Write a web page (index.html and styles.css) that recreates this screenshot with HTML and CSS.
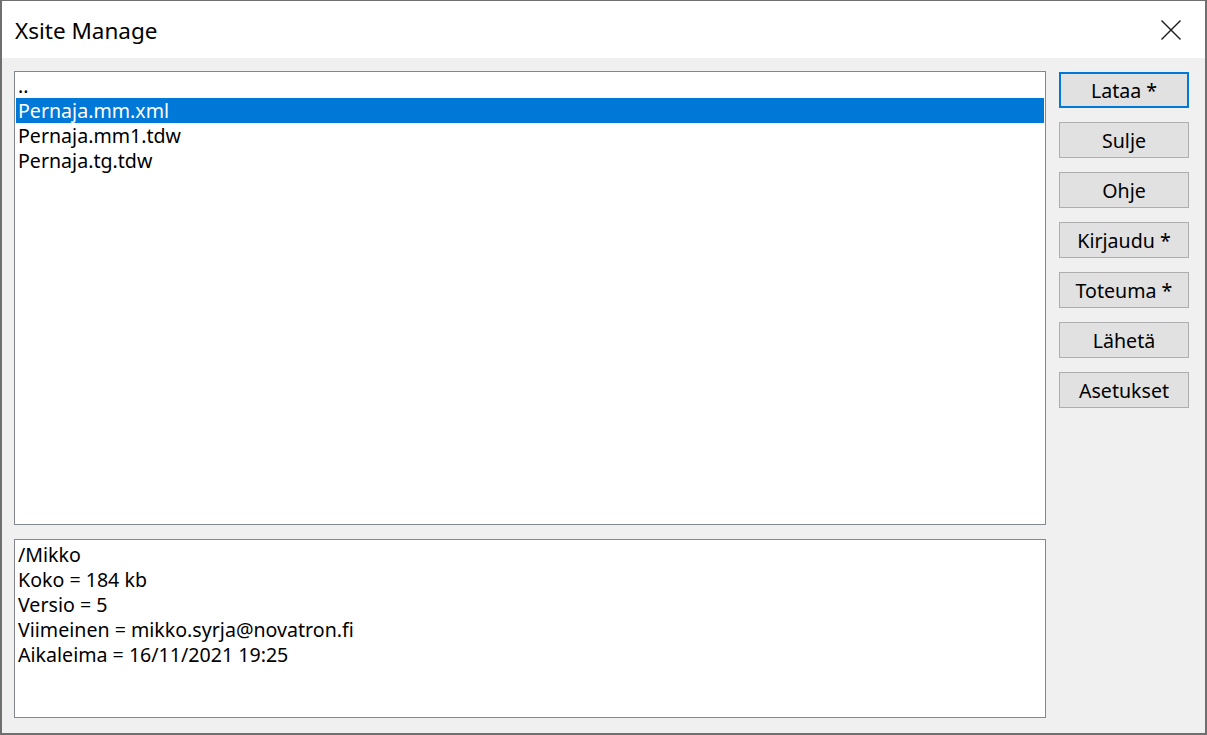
FILE: index.html
```html
<!DOCTYPE html>
<html>
<head>
<meta charset="utf-8">
<link rel="stylesheet" href="styles.css">
</head>
<body>
<div class="window">
  <div class="titlebar">
    <span class="title">Xsite Manage</span>
    <span class="close" aria-label="Close">
      <svg width="20" height="20" viewBox="0 0 20 20"><path d="M0.5 0.5 L19.5 19.5 M19.5 0.5 L0.5 19.5" stroke="#1a1a1a" stroke-width="1.4" fill="none"/></svg>
    </span>
  </div>
  <div class="content">
    <div class="left">
      <div class="listbox">
        <div class="item">..</div>
        <div class="item selected">Pernaja.mm.xml</div>
        <div class="item">Pernaja.mm1.tdw</div>
        <div class="item">Pernaja.tg.tdw</div>
      </div>
      <div class="infobox">
        <div class="line">/Mikko</div>
        <div class="line">Koko = 184 kb</div>
        <div class="line">Versio = 5</div>
        <div class="line">Viimeinen = mikko.syrja@novatron.fi</div>
        <div class="line">Aikaleima = 16/11/2021 19:25</div>
      </div>
    </div>
    <div class="buttons">
      <button class="btn default">Lataa *</button>
      <button class="btn">Sulje</button>
      <button class="btn">Ohje</button>
      <button class="btn">Kirjaudu *</button>
      <button class="btn">Toteuma *</button>
      <button class="btn">Lähetä</button>
      <button class="btn">Asetukset</button>
    </div>
  </div>
</div>
</body>
</html>
```
FILE: styles.css
```css
html, body {
  margin: 0;
  padding: 0;
  background: #ffffff;
}
body {
  font-family: "Noto Sans", "Open Sans", sans-serif;
  color: #000;
}
.window {
  box-sizing: border-box;
  width: 1207px;
  height: 735px;
  border-style: solid;
  border-color: #6f6f6f;
  border-width: 1px 2px 2px 2px;
  display: flex;
  flex-direction: column;
}
.titlebar {
  height: 57px;
  background: #ffffff;
  display: flex;
  align-items: center;
  justify-content: space-between;
  padding: 0 24px 0 13px;
  flex: none;
}
.title {
  font-size: 22.5px;
  color: #000;
  margin-top: 2px;
}
.close {
  display: flex;
  width: 20px;
  height: 20px;
  margin-top: 1px;
}
.content {
  flex: 1;
  background: #f0f0f0;
  display: flex;
  padding: 13px 16px 15px 12px;
  gap: 13px;
}
.left {
  flex: 1;
  display: flex;
  flex-direction: column;
  gap: 14px;
}
.listbox, .infobox {
  background: #fff;
  border: 1px solid #828790;
  padding: 1px;
  box-sizing: border-box;
}
.listbox {
  height: 454px;
}
.infobox {
  flex: 1;
  padding-top: 2px;
}
.item, .line {
  height: 25px;
  line-height: 25px;
  font-size: 19.6px;
  padding-left: 2px;
  white-space: nowrap;
}
.item.selected {
  background: #0078d7;
  color: #fff;
}
.buttons {
  width: 130px;
  display: flex;
  flex-direction: column;
  gap: 14px;
  padding-top: 1px;
}
.btn {
  box-sizing: border-box;
  width: 130px;
  height: 36px;
  background: #e1e1e1;
  border: 1px solid #adadad;
  font-family: "Noto Sans", "Open Sans", sans-serif;
  font-size: 19.6px;
  color: #000;
  padding: 0;
  margin: 0;
}
.btn.default {
  border: 2px solid #0078d7;
}
```
